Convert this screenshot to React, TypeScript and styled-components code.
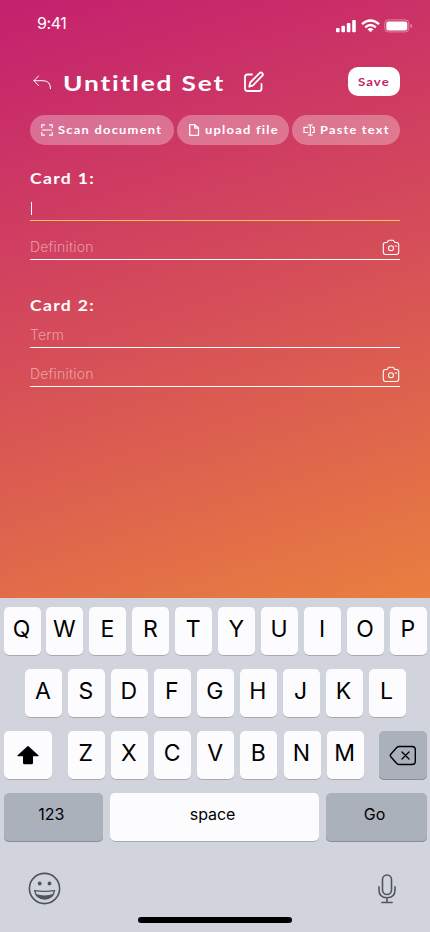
import React from 'react';
import styled, { createGlobalStyle } from 'styled-components';

const GlobalStyle = createGlobalStyle`
  * { box-sizing: border-box; }
  body { margin: 0; }
  button { border: 0; padding: 0; margin: 0; font: inherit; }
  svg { display: block; flex: none; }
`;

const Screen = styled.div`
  width: 430px;
  height: 932px;
  display: flex;
  flex-direction: column;
  overflow: hidden;
  background: #d1d4dc;
  font-family: Inter, "Noto Sans", sans-serif;
`;

const Editor = styled.main`
  height: 598px;
  padding: 0 30px;
  color: #fff;
  background: linear-gradient(162deg, #c4206f 0%, #d64f58 52%, #e97f3f 100%);
`;

const StatusBar = styled.div`
  height: 66px;
  margin-right: -13px;
  padding: 14px 0 0 7px;
  display: flex;
  justify-content: space-between;
`;

const Clock = styled.time`
  font-size: 16px;
  line-height: 19px;
  letter-spacing: -0.4px;
  font-weight: 400;
`;

const StatusIcons = styled.div`
  display: flex;
  align-items: flex-start;
  gap: 4px;
  padding-top: 5px;
`;

const TitleBar = styled.header`
  height: 32px;
  display: flex;
  align-items: center;
`;

const Wide = styled.span<{ $width: number; $stretch: number }>`
  display: block;
  flex: none;
  width: ${p => p.$width}px;
  white-space: nowrap;
  transform: scaleX(${p => p.$stretch});
  transform-origin: left center;
`;

const Title = styled.h1`
  margin: 1px 17px 0 12px;
  font-family: Lato, sans-serif;
  font-size: 21px;
  line-height: 32px;
  font-weight: 700;
  letter-spacing: 1.5px;
`;

const SaveButton = styled.button`
  width: 52px;
  height: 29px;
  margin-left: auto;
  padding-left: 10px;
  margin-top: -1px;
  border-radius: 10px;
  background: #fff;
  color: #c4206f;
  font-family: Lato, sans-serif;
  font-size: 10.5px;
  font-weight: 700;
  letter-spacing: 0.9px;
  text-align: left;
`;

const Sources = styled.div`
  display: flex;
  justify-content: space-between;
  margin-top: 17px;
`;

const SourceButton = styled.button<{ $width: number }>`
  width: ${p => p.$width}px;
  height: 30px;
  border-radius: 15px;
  padding-left: 11px;
  display: flex;
  align-items: center;
  gap: 5px;
  text-align: left;
  color: #fff;
  background: rgba(255, 255, 255, 0.3);
  font-family: Lato, sans-serif;
  font-size: 10.5px;
  font-weight: 700;
  letter-spacing: 1px;
`;

const Card = styled.section<{ $top: number }>`
  margin-top: ${p => p.$top}px;
`;

const CardTitle = styled.h2`
  margin: 0;
  padding-top: 1px;
  height: 20px;
  font-family: Lato, sans-serif;
  font-size: 14.5px;
  line-height: 20px;
  font-weight: 700;
  letter-spacing: 1.1px;
`;

const Field = styled.div<{ $height: number; $active?: boolean }>`
  height: ${p => p.$height}px;
  padding-bottom: 3px;
  display: flex;
  align-items: flex-end;
  justify-content: space-between;
  border-bottom: 1px solid ${p => (p.$active ? '#efc75a' : '#fff')};
  font-weight: 300;
  font-size: 14px;
  letter-spacing: 0.2px;
  line-height: 18px;
  color: rgba(255, 255, 255, 0.47);
`;

const Caret = styled.i`
  width: 1px;
  height: 13px;
  margin: 0 0 2px 1px;
  background: #fff;
`;

const Keyboard = styled.section`
  flex: 1;
  padding: 9px 3px 0 3.5px;
  color: #000;
`;

const KeyRow = styled.div<{ $inset?: number }>`
  display: flex;
  justify-content: space-between;
  padding: 0 ${p => p.$inset ?? 0}px;
  margin-bottom: 13px;
`;

const LetterGroup = styled.div`
  width: 296px;
  display: flex;
  justify-content: space-between;
  margin-right: -1px;
`;

const Key = styled.button<{ $width?: number; $gray?: boolean; $small?: boolean; $icon?: boolean }>`
  width: ${p => p.$width ?? 37}px;
  height: 49px;
  padding: 0 ${p => (p.$icon ? 0 : p.$small ? 4 : 1)}px ${p => (p.$icon ? 1 : p.$small ? 7 : 6)}px 0;
  display: flex;
  align-items: center;
  justify-content: center;
  border-radius: 5px;
  background: ${p => (p.$gray ? '#abb1bb' : '#fcfcfe')};
  box-shadow: inset 0 -1px 0 ${p => (p.$gray ? '#898d93' : '#aaa9ac')};
  font-size: ${p => (p.$small ? 16 : 23)}px;
  letter-spacing: ${p => (p.$small ? -0.1 : 0)}px;
  color: #000;
`;

const KeyboardFooter = styled.div`
  display: flex;
  align-items: center;
  justify-content: space-between;
  padding: 17px 31px 0 24.5px;
`;

const HomeIndicator = styled.div`
  width: 154px;
  height: 6px;
  margin: 12px auto 0;
  border-radius: 3px;
  background: #000;
`;

const Signal = () => (
  <svg width="21" height="14" viewBox="0 0 21 14" fill="#fff">
    <rect x="0" y="9" width="3.6" height="4.3" rx="1" />
    <rect x="5.4" y="6.8" width="3.6" height="6.5" rx="1" />
    <rect x="10.8" y="4" width="3.6" height="9.3" rx="1" />
    <rect x="16.2" y="1" width="3.6" height="12.3" rx="1" />
  </svg>
);

const Wifi = () => (
  <svg width="19" height="14" viewBox="0 0 19 14" fill="none" stroke="#fff" strokeWidth="2.4">
    <path d="M1 5.2Q9.5-2 18 5.2M4.2 8.3Q9.5 3.8 14.8 8.3" />
    <path d="M9.5 13.2 6.5 10.2Q9.5 7.7 12.5 10.2Z" fill="#fff" stroke="none" />
  </svg>
);

const Battery = () => (
  <svg width="29" height="14" viewBox="0 0 29 14" fill="none">
    <rect x=".8" y=".9" width="24" height="12" rx="3.5" stroke="#fff" strokeOpacity=".4" />
    <rect x="2.3" y="2.4" width="21" height="9" rx="2" fill="#fff" />
    <path d="M26.5 4.8q1.7.7 1.7 2.1t-1.7 2.1z" fill="#fff" opacity=".45" />
  </svg>
);

const BackIcon = () => (
  <svg width="21" height="17" viewBox="0 0 21 17" fill="none" stroke="#fff" strokeWidth="1" strokeLinecap="round" strokeLinejoin="round">
    <path d="M8.5 2 4 6.7l4.5 4.8M4 6.7h9q7.5 0 7.5 8" />
  </svg>
);

const EditIcon = () => (
  <svg width="22" height="22" viewBox="0 0 22 22" fill="none" stroke="#fff" strokeWidth="1.8" strokeLinecap="round" strokeLinejoin="round">
    <path d="M9 3.500H4.500Q2 3.500 2 6v11.500Q2 20 4.500 20h11.500q2.500 0 2.500-2.500V13" />
    <path d="m6.300 15.700.9-4.200 9.400-9.400q1.300-1.100 2.600 0t.2 2.600l-9.400 9.600Z" />
  </svg>
);

const ScanIcon = () => (
  <svg width="12" height="12" viewBox="0 0 12 12" fill="none" stroke="#fff" strokeWidth="1.15">
    <path d="M.8 4V.9H4M8 .9h3.200V4M.8 8v3.100H4M8 11.100h3.200V8M.8 6h10.400" />
  </svg>
);

const FileIcon = () => (
  <svg width="12" height="12" viewBox="0 0 12 12" fill="none" stroke="#fff" strokeWidth="1.25" strokeLinejoin="round">
    <path d="M1.700.7h5L10.500 4v7.300H1.700ZM6.700.7V4h3.800" />
  </svg>
);

const PasteIcon = () => (
  <svg width="12" height="12" viewBox="0 0 12 12" fill="none" stroke="#fff" strokeWidth="1.2">
    <path d="M7.400 1v10M5.200.8q2.200 0 2.200.8 0-.8 2.200-.8M5.200 11.200q2.200 0 2.200-.8 0 .8 2.200.8M5.300 3.300H1v5.200h4.300M9 3.300h2.200v5.200H9" />
  </svg>
);

const CameraIcon = () => (
  <svg width="18" height="17" viewBox="0 0 18 17" fill="none" stroke="#fff" strokeWidth="1.100" strokeLinejoin="round">
    <path d="M3.400 3.500h1.200q.8 0 1.100-.8L6.200 1.800q.3-.6 1-.6h3.600q.7 0 1 .6l.5.900q.3.800 1.100.8h1.200Q16.700 3.500 16.700 5.600v7.500q0 2.400-2.400 2.400H3.700q-2.400 0-2.400-2.400V5.600q0-2.100 2.100-2.100Z" />
    <circle cx="9" cy="9.300" r="2.500" />
    <path d="M13.300 7h1.200" strokeLinecap="round" />
  </svg>
);

const ShiftIcon = () => (
  <svg width="24" height="20" viewBox="0 0 24 20">
    <path d="M11.200 1.400q.8-.8 1.600 0l9.600 8.800q.9 1-.4 1H17v6.500q0 1.500-1.500 1.500h-7Q7 19.200 7 17.700v-6.500H2q-1.300 0-.4-1Z" />
  </svg>
);

const DeleteIcon = () => (
  <svg width="28" height="21" viewBox="0 0 28 21" fill="none" stroke="#000" strokeWidth="1.400" strokeLinecap="round" strokeLinejoin="round">
    <path d="M10.200 1.500H23q3.300 0 3.300 3.300v11.400q0 3.300-3.300 3.300H10.200q-1.400 0-2.400-1l-6-6.800q-1-1.200 0-2.400l6-6.800q1-1 2.400-1ZM13 7l7 7M20 7l-7 7" />
  </svg>
);

const SmileIcon = () => (
  <svg width="33" height="33" viewBox="0 0 33 33" fill="none" stroke="#50555c" strokeWidth="1.600">
    <circle cx="16.500" cy="16.500" r="15.100" />
    <circle cx="11.700" cy="11.500" r="1.900" fill="#50555c" stroke="none" />
    <circle cx="21.500" cy="11.500" r="1.900" fill="#50555c" stroke="none" />
    <path d="M6.600 18.700q9.900 1.400 19.900 0-1.600 8.400-9.900 8.400t-10-8.400Z" strokeWidth="1.300" />
    <path d="M7.700 21.800q8.900 3.400 17.800 0-2.700 5.300-8.900 5.300t-8.900-5.300Z" fill="#50555c" stroke="none" />
  </svg>
);

const MicIcon = () => (
  <svg width="18" height="30" viewBox="0 0 18 30" fill="none" stroke="#50555c" strokeWidth="1.600" strokeLinecap="round">
    <rect x="4.500" y="1" width="9" height="19.500" rx="4.500" />
    <path d="M1 12.700v3q0 8 8 8t8-8v-3M9 23.700v4.500M3.900 28.500h10.200" />
  </svg>
);

const sources = [
  { label: 'Scan document', width: 144, text: 103, stretch: 1.23, icon: <ScanIcon /> },
  { label: 'upload file', width: 112, text: 74, stretch: 1.23, icon: <FileIcon /> },
  { label: 'Paste text', width: 108, text: 70, stretch: 1.22, icon: <PasteIcon /> },
];

const topLetters = 'QWERTYUIOP'.split('');
const middleLetters = 'ASDFGHJKL'.split('');
const bottomLetters = 'ZXCVBNM'.split('');

export default function App() {
  return (
    <>
      <GlobalStyle />
      <Screen>
        <Editor>
          <StatusBar>
            <Clock>9:41</Clock>
            <StatusIcons>
              <Signal />
              <Wifi />
              <Battery />
            </StatusIcons>
          </StatusBar>
          <TitleBar>
            <BackIcon />
            <Title><Wide $width={163} $stretch={1.25}>Untitled Set</Wide></Title>
            <EditIcon />
            <SaveButton><Wide $width={33} $stretch={1.25}>Save</Wide></SaveButton>
          </TitleBar>
          <Sources>
            {sources.map(s => (
              <SourceButton key={s.label} $width={s.width}>
                {s.icon}
                <Wide $width={s.text} $stretch={s.stretch}>{s.label}</Wide>
              </SourceButton>
            ))}
          </Sources>
          <Card $top={23}>
            <CardTitle><Wide $width={66} $stretch={1.21}>Card 1:</Wide></CardTitle>
            <Field $height={33} $active><Caret /></Field>
            <Field $height={39}>Definition<CameraIcon /></Field>
          </Card>
          <Card $top={35}>
            <CardTitle><Wide $width={66} $stretch={1.21}>Card 2:</Wide></CardTitle>
            <Field $height={33}>Term</Field>
            <Field $height={39}>Definition<CameraIcon /></Field>
          </Card>
        </Editor>
        <Keyboard>
          <KeyRow>{topLetters.map(k => <Key key={k}>{k}</Key>)}</KeyRow>
          <KeyRow $inset={21.5}>{middleLetters.map(k => <Key key={k}>{k}</Key>)}</KeyRow>
          <KeyRow>
            <Key $width={48.5} $icon><ShiftIcon /></Key>
            <LetterGroup>{bottomLetters.map(k => <Key key={k}>{k}</Key>)}</LetterGroup>
            <Key $width={48.5} $gray $icon><DeleteIcon /></Key>
          </KeyRow>
          <KeyRow>
            <Key $width={99.5} $gray $small>123</Key>
            <Key $width={209} $small>space</Key>
            <Key $width={101} $gray $small>Go</Key>
          </KeyRow>
          <KeyboardFooter>
            <SmileIcon />
            <MicIcon />
          </KeyboardFooter>
          <HomeIndicator />
        </Keyboard>
      </Screen>
    </>
  );
}
